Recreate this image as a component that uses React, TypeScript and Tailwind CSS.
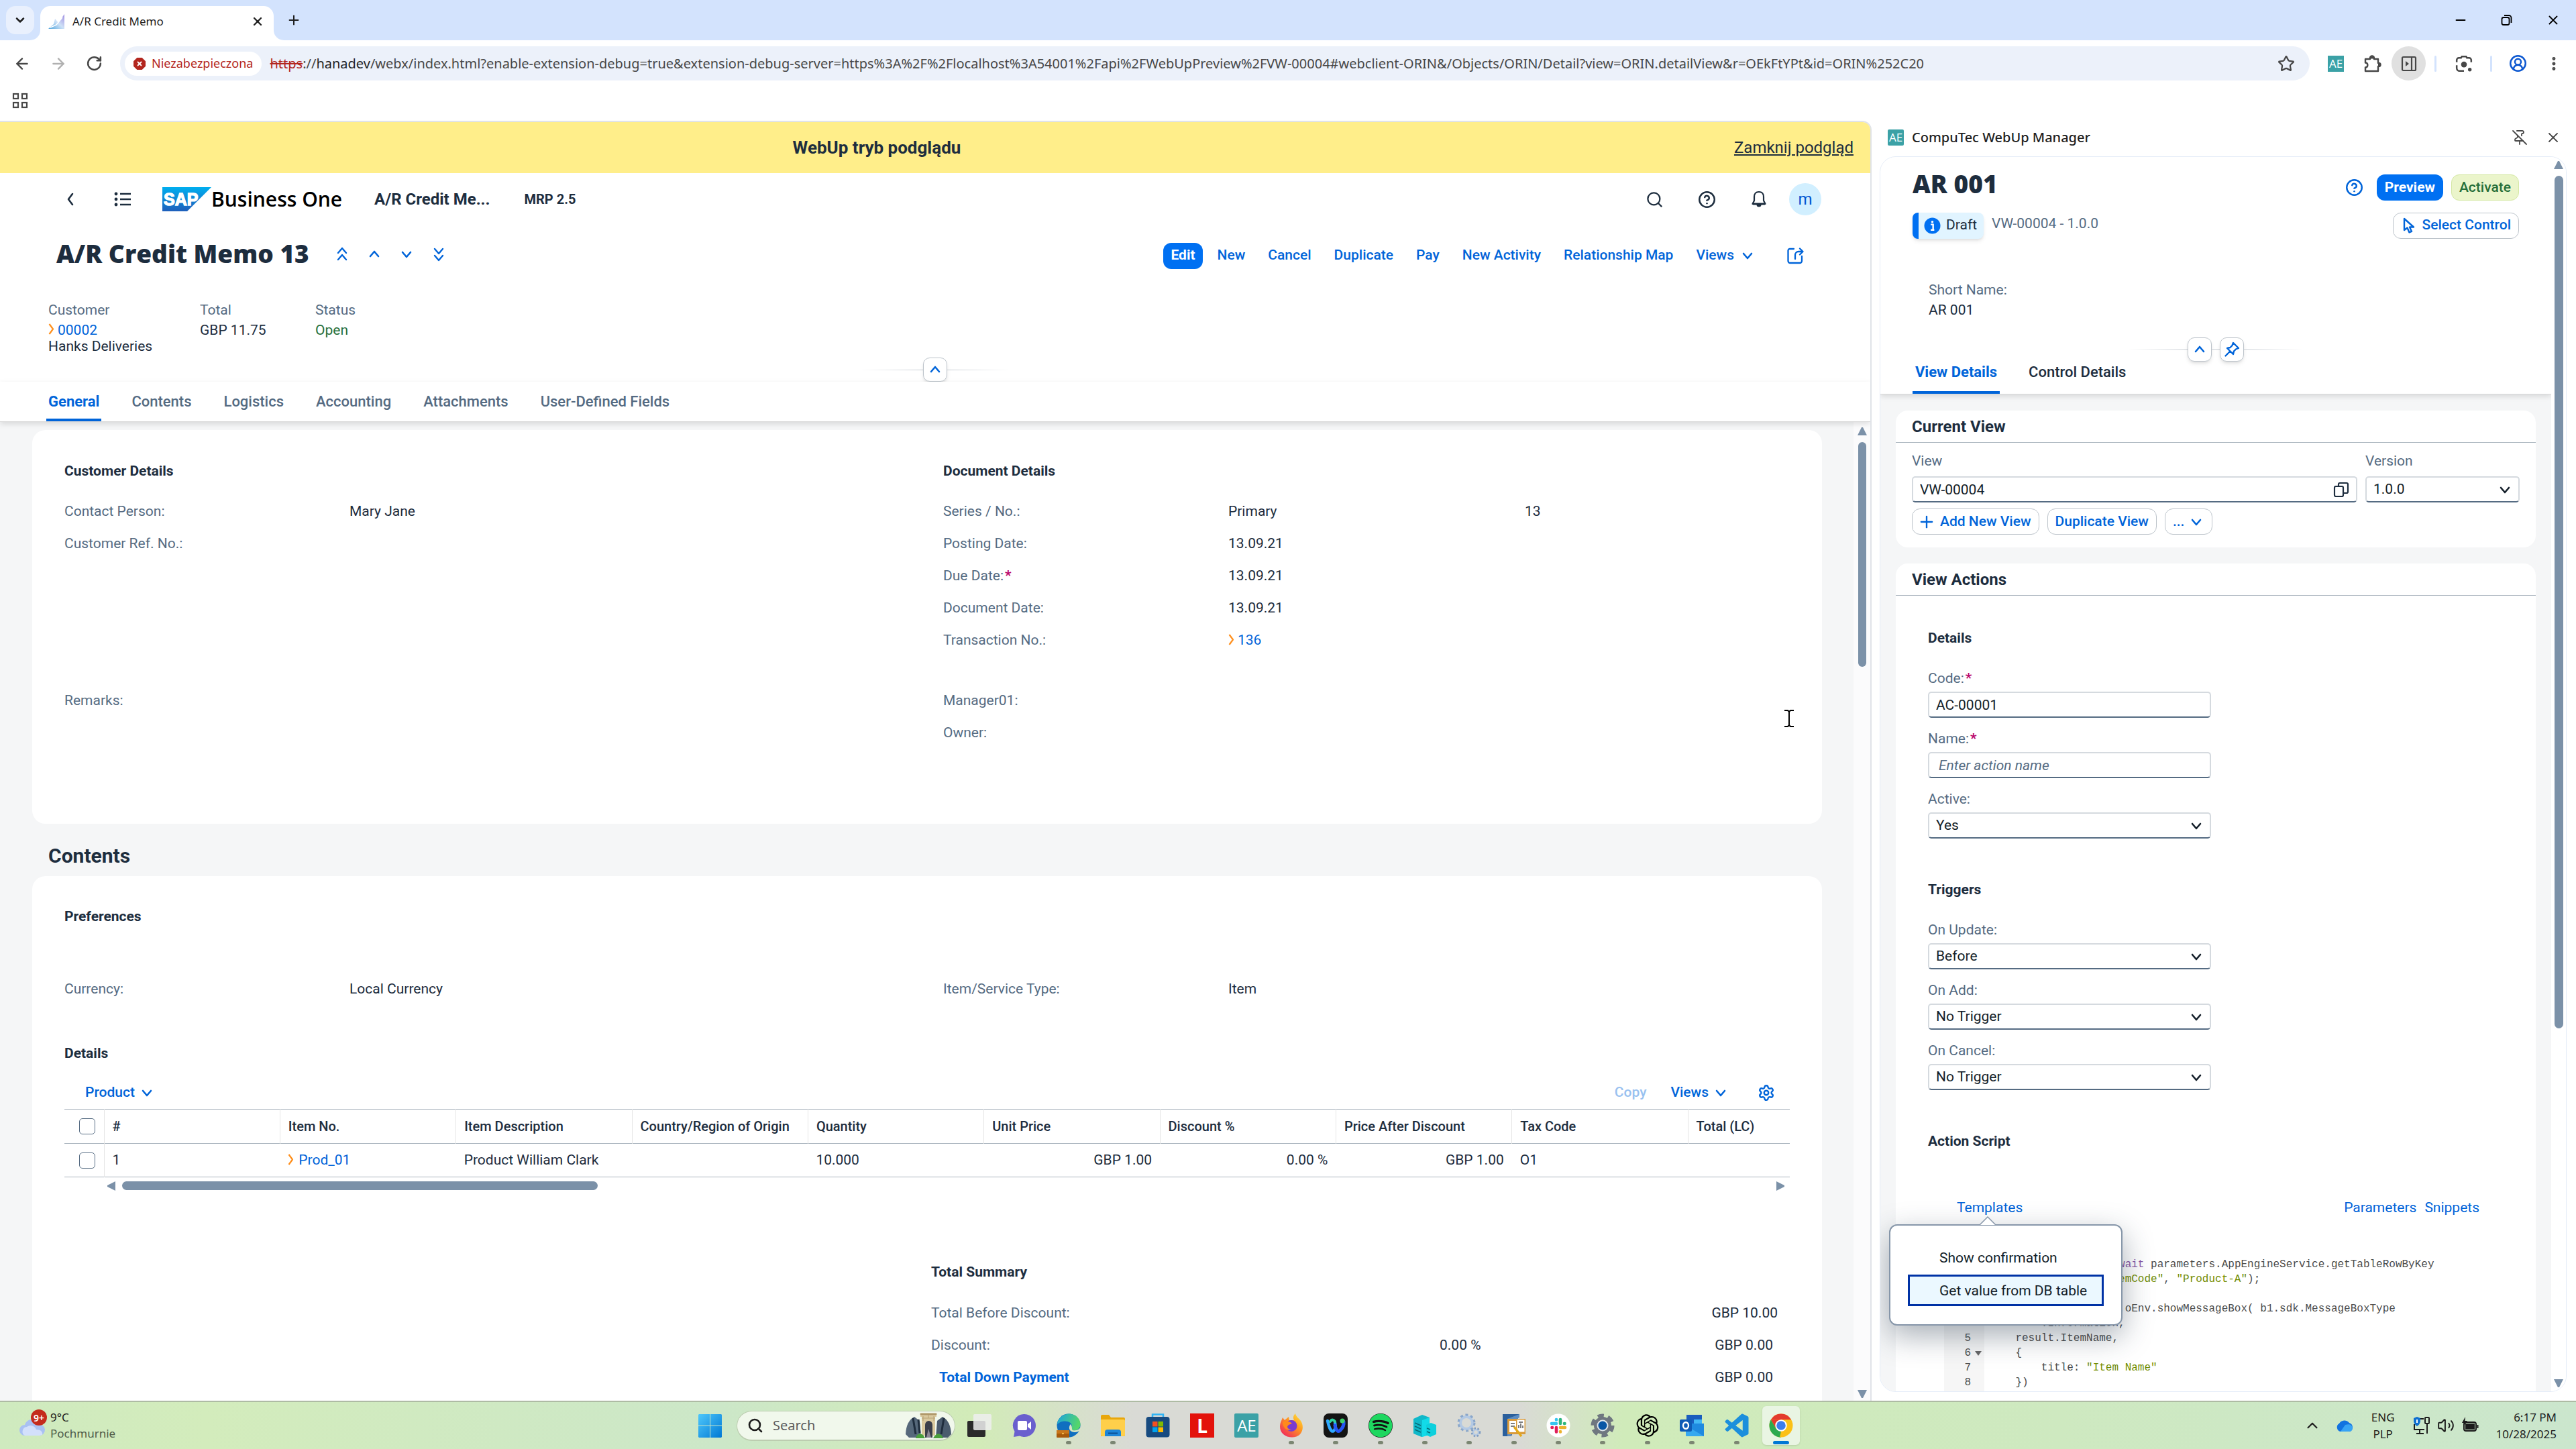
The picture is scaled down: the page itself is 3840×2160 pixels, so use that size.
import React from "react";
import {
  ArrowLeft,
  ArrowRight,
  ChevronDown,
  ChevronUp,
  CircleHelp,
  CircleUserRound,
  EllipsisVertical,
  Minus,
  PinOff,
  Plus,
  RotateCw,
  Search,
  Settings,
  Star,
  Volume2,
  X,
} from "lucide-react";
import { FaSpotify } from "react-icons/fa";
import { RiOpenaiFill } from "react-icons/ri";
import { BiLogoVisualStudio } from "react-icons/bi";

type ChevronProps = { dir?: "up" | "down" | "left" | "right"; className?: string };

const chevronPaths = {
  up: "M6 15 L12 8 L18 15",
  down: "M6 9 L12 16 L18 9",
  left: "M15 4 L9 12 L15 20",
  right: "M9 4 L15 12 L9 20",
};

const Chevron: React.FC<ChevronProps> = ({ dir = "down", className = "" }) => (
  <svg viewBox="0 0 24 24" className={`size-6 shrink-0 ${className}`} fill="none" stroke="currentColor" strokeWidth="2.6">
    <path d={chevronPaths[dir]} strokeLinecap="round" strokeLinejoin="round" />
  </svg>
);

const DoubleChevron: React.FC<{ up?: boolean }> = ({ up }) => (
  <svg viewBox="0 0 24 24" className="size-6" fill="none" stroke="currentColor" strokeWidth="2.4" strokeLinecap="round" strokeLinejoin="round">
    {up ? <path d="M6 10 L12 3 L18 10 M6 20 L12 13 L18 20" /> : <path d="M6 4 L12 11 L18 4 M6 14 L12 21 L18 14" />}
  </svg>
);

const LinkArrow: React.FC = () => (
  <svg viewBox="0 0 10 20" className="h-5 w-2.5 shrink-0 text-[#ff8f1c]" fill="none" stroke="currentColor" strokeWidth="2.2">
    <path d="M1.5 1 L7 8.5 L1.5 16" strokeLinejoin="round" />
  </svg>
);

const PinIcon: React.FC = () => (
  <svg viewBox="0 0 24 24" className="size-6" fill="none" stroke="currentColor" strokeWidth="2.4" strokeLinejoin="round" strokeLinecap="round">
    <path d="M14 2 L22 10 L18 11.500 L15 14.500 L14 19 L5 10 L9.500 9 L12.500 6 Z M9.500 14.500 L2.500 21.500" />
  </svg>
);

const BellIcon: React.FC = () => (
  <svg viewBox="0 0 26 26" className="size-[26px]" fill="none" stroke="currentColor" strokeWidth="2.200" strokeLinejoin="round">
    <path d="M13 2 C8.500 2 6 5 6 9.500 V15 L3.500 20 H22.500 L20 15 V9.500 C20 5 17.500 2 13 2 Z" />
    <path d="M4 20 H22" strokeWidth="3" />
    <path d="M9.500 21 H16.500 A3.500 3.500 0 0 1 9.500 21 Z" fill="currentColor" stroke="none" />
  </svg>
);

const AeBadge: React.FC<{ className?: string }> = ({ className = "size-6 text-[17px]" }) => (
  <span className={`flex items-center justify-center bg-[#3ba1a6] text-white font-['Open_Sans'] leading-none ${className}`}>AE</span>
);

/* ---------- browser chrome ---------- */

const TabStrip: React.FC = () => (
  <div className="flex h-[60px] items-end bg-[#d3e3fd] pl-[9px] text-[#1f1f1f]">
    <button aria-label="Search tabs" className="mb-[9px] flex size-[42px] items-center justify-center rounded-[14px] bg-[#e9f0fd]">
      <ChevronDown className="size-5" strokeWidth={3} />
    </button>
    <div className="relative ml-[9px] flex h-[51px] w-[348px] items-center rounded-t-[15px] bg-white pb-1.5 pl-3 pr-3.5">
      <svg viewBox="0 0 15 15" className="absolute -left-[15px] bottom-0 size-[15px]" fill="#fff">
        <path d="M15 0 V15 H0 A15 15 0 0 0 15 0 Z" />
      </svg>
      <svg viewBox="0 0 15 15" className="absolute -right-[15px] bottom-0 size-[15px]" fill="#fff">
        <path d="M0 0 V15 H15 A15 15 0 0 1 0 0 Z" />
      </svg>
      <svg viewBox="0 0 24 24" className="size-6">
        <defs>
          <linearGradient id="fav" x1="0" y1="1" x2="1" y2="0">
            <stop offset="0" stopColor="#4fa4dc" />
            <stop offset="0.5" stopColor="#cfe2f7" />
            <stop offset="1" stopColor="#9d8be0" />
          </linearGradient>
        </defs>
        <path d="M0 23 L8 16 L10 8 L15 14 L24 1 V23 Z" fill="url(#fav)" />
        <path d="M3 21 L12 17 L21 6" stroke="#fff" strokeWidth="1.5" fill="none" />
      </svg>
      <span className="ml-3 flex-1 text-[17px]">A/R Credit Memo</span>
      <button aria-label="Close tab">
        <X className="size-5" strokeWidth={2.8} />
      </button>
    </div>
    <button aria-label="New tab" className="mb-[19px] ml-[19px]">
      <Plus className="size-[22px]" strokeWidth={2.2} />
    </button>
    <div className="mb-[19px] ml-auto flex items-center gap-[47px] pr-[23px] text-black">
      <button aria-label="Minimize">
        <Minus className="size-[22px]" strokeWidth={2.2} />
      </button>
      <button aria-label="Restore">
        <svg viewBox="0 0 22 22" className="size-[22px]" fill="none" stroke="currentColor" strokeWidth="1.8">
          <rect x="3.5" y="7" width="11" height="11" rx="2.5" />
          <path d="M7 4 H14 A3.5 3.5 0 0 1 17.5 7.500 V15" />
        </svg>
      </button>
      <button aria-label="Close">
        <X className="size-[22px]" strokeWidth={2} />
      </button>
    </div>
  </div>
);

const AddressBar: React.FC = () => (
  <div className="flex h-[69px] items-center text-[#474747]">
    <button aria-label="Back" className="ml-[20px]">
      <ArrowLeft className="size-[26px]" strokeWidth={2.2} />
    </button>
    <button aria-label="Forward" disabled className="ml-[28px] text-[#b0b0b0]">
      <ArrowRight className="size-[26px]" strokeWidth={2.2} />
    </button>
    <button aria-label="Reload" className="ml-[28px]">
      <RotateCw className="size-[25px]" strokeWidth={2.4} />
    </button>
    <div className="ml-[26px] flex h-[51px] min-w-0 flex-1 items-center rounded-full bg-[#ecf1fa] pl-[7px] pr-[22px]">
      <span className="flex h-9 items-center rounded-full bg-white px-[13px] text-[18px] text-[#b3261e]">
        <svg viewBox="0 0 18 18" className="mr-[9px] size-[18px]">
          <path d="M5.300 0 H12.700 L18 5.300 V12.700 L12.700 18 H5.300 L0 12.700 V5.300 Z" fill="#b3261e" />
          <path d="M6 6 L12 12 M12 6 L6 12" stroke="#fff" strokeWidth="1.800" />
        </svg>
        Niezabezpieczona
      </span>
      <span className="ml-3 min-w-0 flex-1 overflow-hidden whitespace-nowrap text-[20px]">
        <span className="text-[#b3261e] line-through">https</span>://<span className="text-[#1f1f1f]">hanadev</span>
        /webx/index.html?enable-extension-debug=true&amp;extension-debug-server=https%3A%2F%2Flocalhost%3A54001%2Fapi%2FWebUpPreview%2FVW-00004#webclient-ORIN&amp;/Objects/ORIN/Detail?view=ORIN.detailView&amp;r=OEkFtYPt&amp;id=ORIN%252C20
      </span>
      <button aria-label="Bookmark this page">
        <Star className="size-[26px]" strokeWidth={2.1} />
      </button>
    </div>
    <div className="ml-[27px] flex items-center pr-[20px]">
      <AeBadge className="size-6 text-[17px]" />
      <button aria-label="Extensions" className="ml-[29px]">
        <svg viewBox="0 0 28 28" className="size-7" fill="none" stroke="currentColor" strokeWidth="2.400" strokeLinejoin="round">
          <path d="M3 7 H10 V5.500 A3 3 0 0 1 16 5.500 V7 H22 V13 H23 A2.500 2.500 0 0 1 23 18 H22 V25 H3 V19.500 C7.500 19.500 7.500 12.500 3 12.500 Z" />
          <path d="M10.500 6.500 A2.500 3 0 0 1 15.500 6.500 Z M22 13.500 H23 A2 2 0 0 1 23 17.500 H22 Z" fill="currentColor" stroke="none" />
        </svg>
      </button>
      <button aria-label="Side panel" className="ml-[14px] flex size-[51px] items-center justify-center rounded-full bg-[#e0e0e0]">
        <svg viewBox="0 0 24 24" className="size-6" fill="none" stroke="currentColor" strokeWidth="2.2">
          <rect x="2" y="2" width="20" height="20" rx="1.500" />
          <path d="M16 2 V22" />
          <path d="M7 8 L12 12 L7 16 Z" fill="currentColor" stroke="none" />
        </svg>
      </button>
      <span className="ml-[13px] h-6 w-[3px] rounded bg-[#d3e3fd]" />
      <button aria-label="Search with Lens" className="ml-[28px]">
        <svg viewBox="0 0 24 24" className="size-[26px]" fill="none" stroke="currentColor" strokeWidth="2.300">
          <path d="M2 10 V7 A3 3 0 0 1 5 4 H8 L9 2 H15 L16 4 H19 A3 3 0 0 1 22 7 V10 M2 14 V18 A4 4 0 0 0 6 22 H12" />
          <circle cx="12" cy="13" r="4" fill="currentColor" stroke="none" />
          <circle cx="20" cy="20" r="2.500" fill="currentColor" stroke="none" />
        </svg>
      </button>
      <span className="ml-[26px] h-6 w-[3px] rounded bg-[#d3e3fd]" />
      <button aria-label="Profile" className="ml-[25px] text-[#0b57d0]">
        <CircleUserRound className="size-[27px]" strokeWidth={2.2} />
      </button>
      <button aria-label="Menu" className="ml-[27px]">
        <EllipsisVertical className="size-[26px]" strokeWidth={2.6} />
      </button>
    </div>
  </div>
);

const BookmarksBar: React.FC = () => (
  <div className="flex h-[51px] items-center pb-[9px] pl-[17px] text-[#474747]">
    <button aria-label="Tab groups">
      <svg viewBox="0 0 26 26" className="size-[26px]" fill="none" stroke="currentColor" strokeWidth="2.200">
        <rect x="3" y="3" width="7" height="7" />
        <rect x="16" y="3" width="7" height="7" />
        <rect x="3" y="16" width="7" height="7" />
        <rect x="16" y="16" width="7" height="7" />
      </svg>
    </button>
  </div>
);

/* ---------- main application ---------- */

const SapLogo: React.FC = () => (
  <svg viewBox="0 0 73 36" className="h-9 w-[73px]" role="img" aria-label="SAP">
    <defs>
      <linearGradient id="sap" x1="0" y1="0" x2="0" y2="1">
        <stop offset="0" stopColor="#00aeef" />
        <stop offset="1" stopColor="#1e5fbb" />
      </linearGradient>
    </defs>
    <path d="M0 0 H73 L37 36 H0 Z" fill="url(#sap)" />
    <text x="2" y="27" fontFamily="Liberation Sans" fontWeight="700" fontSize="25" fill="#fff" stroke="#fff" strokeWidth="1.4">
      SAP
    </text>
  </svg>
);

const ShellBar: React.FC = () => (
  <div className="flex h-[78px] items-center pl-[93px] pr-[73px]">
    <button aria-label="Back">
      <Chevron dir="left" />
    </button>
    <button aria-label="Menu" className="ml-[53px]">
      <svg viewBox="0 0 26 26" className="size-[26px]" stroke="currentColor" strokeWidth="2.400" fill="currentColor">
        <path d="M9 5 H25 M9 13 H25 M9 21 H25" />
        <circle cx="3" cy="5" r="1.200" />
        <circle cx="3" cy="13" r="1.200" />
        <circle cx="3" cy="21" r="1.200" />
      </svg>
    </button>
    <a href="#home" className="ml-[46px] flex items-center">
      <SapLogo />
      <span className="font-['Open_Sans'] text-[30px] font-semibold leading-9 text-black">Business One</span>
    </a>
    <span className="ml-12 text-[24px] font-bold">A/R Credit Me...</span>
    <span className="ml-[51px] text-[20px] font-bold">MRP 2.5</span>
    <div className="ml-auto flex items-center gap-[51px]">
      <button aria-label="Search">
        <Search className="size-[27px]" strokeWidth={2} />
      </button>
      <button aria-label="Help">
        <CircleHelp className="size-[27px]" strokeWidth={2.2} />
      </button>
      <button aria-label="Notifications">
        <BellIcon />
      </button>
      <span className="-ml-[19px] flex size-12 items-center justify-center rounded-full bg-[#d1efff] text-[24px] text-[#0057d2]">m</span>
    </div>
  </div>
);

const TitleRow: React.FC = () => (
  <div className="flex h-[84px] items-center pl-[84px] pr-[99px]">
    <h1 className="font-['Open_Sans'] text-[37px] font-extrabold leading-[78px]">A/R Credit Memo 13</h1>
    <div className="ml-[37px] flex items-center gap-6 pt-0.5 text-[#0064d9]">
      <button aria-label="First record">
        <DoubleChevron up />
      </button>
      <button aria-label="Previous record">
        <Chevron dir="up" />
      </button>
      <button aria-label="Next record">
        <Chevron />
      </button>
      <button aria-label="Last record">
        <DoubleChevron />
      </button>
    </div>
    <div className="ml-auto flex items-center gap-2.5 pt-1.5 text-[21px] font-medium text-[#0064d9]">
      <button className="h-[39px] rounded-xl bg-[#0070f2] px-[11px] font-bold text-white">Edit</button>
      {["New", "Cancel", "Duplicate", "Pay", "New Activity", "Relationship Map"].map((label) => (
        <button key={label} className="h-[39px] px-3">
          {label}
        </button>
      ))}
      <button className="flex h-[39px] items-center gap-2 px-3">
        Views <Chevron />
      </button>
      <button aria-label="Share" className="ml-6">
        <svg viewBox="0 0 26 26" className="size-[26px]" fill="none" stroke="currentColor" strokeWidth="2.300" strokeLinejoin="round" strokeLinecap="round">
          <path d="M11 3 H5 A2.500 2.500 0 0 0 2.500 5.500 V21 A3 3 0 0 0 5.500 24 H20 A3 3 0 0 0 23 21 V14" />
          <path d="M13 18 V12 A5 5 0 0 1 18 7 H24 M20 2.500 L24.500 7 L20 11.500" />
        </svg>
      </button>
    </div>
  </div>
);

const Facets: React.FC = () => (
  <dl className="mt-[30px] flex h-[83px] pl-[72px] text-[21px] leading-6">
    <div className="w-[226px]">
      <dt className="mb-1.5 text-[#556b82]">Customer</dt>
      <dd>
        <a href="#customer" className="flex items-center gap-1 text-[#0064d9]">
          <LinkArrow /> 00002
        </a>
        Hanks Deliveries
      </dd>
    </div>
    <div className="w-[172px]">
      <dt className="mb-1.5 text-[#556b82]">Total</dt>
      <dd>GBP 11.75</dd>
    </div>
    <div>
      <dt className="mb-1.5 text-[#556b82]">Status</dt>
      <dd className="text-[#256f3a]">Open</dd>
    </div>
  </dl>
);

const sectionTabs = ["General", "Contents", "Logistics", "Accounting", "Attachments", "User-Defined Fields"];

const SectionTabs: React.FC = () => (
  <nav className="relative z-10 flex h-[60px] items-stretch gap-[42px] border-b border-[#d9d9d9] bg-white pl-[69px] text-[22px] font-medium text-[#556b82] shadow-[0_3px_8px_rgba(0,0,0,0.12)]">
    {sectionTabs.map((tab, i) => (
      <a
        key={tab}
        href={`#${tab}`}
        className={`flex items-center border-b-4 px-[3px] pt-1 ${i === 0 ? "border-[#0064d9] font-bold text-[#0064d9]" : "border-transparent"}`}
      >
        {tab}
      </a>
    ))}
  </nav>
);

const Required: React.FC = () => <span className="ml-0.5 font-bold text-[#ba066c]">*</span>;

type FieldProps = { label: string; value?: React.ReactNode; extra?: string; required?: boolean };

const Field: React.FC<FieldProps> = ({ label, value, extra, required }) => (
  <div className="flex h-12 items-center pt-0.5">
    <span className="w-[425px] text-[#556b82]">
      {label}:{required && <Required />}
    </span>
    <span className="w-[442px]">{value}</span>
    {extra && <span>{extra}</span>}
  </div>
);

const GeneralCard: React.FC = () => (
  <section className="mx-12 mr-[47px] mt-3 grid grid-cols-2 rounded-[20px] bg-white pb-28 pl-12 pt-[49px]">
    <div>
      <h3 className="mb-6 font-bold leading-6">Customer Details</h3>
      <Field label="Contact Person" value="Mary Jane" />
      <Field label="Customer Ref. No." />
      <div className="mt-[186px]">
        <Field label="Remarks" />
      </div>
    </div>
    <div>
      <h3 className="mb-6 font-bold leading-6">Document Details</h3>
      <Field label="Series / No." value="Primary" extra="13" />
      <Field label="Posting Date" value="13.09.21" />
      <Field label="Due Date" value="13.09.21" required />
      <Field label="Document Date" value="13.09.21" />
      <Field
        label="Transaction No."
        value={
          <a href="#transaction" className="flex items-center gap-1 text-[#0064d9]">
            <LinkArrow /> 136
          </a>
        }
      />
      <div className="mt-[42px]">
        <Field label="Manager01" />
        <Field label="Owner" />
      </div>
    </div>
  </section>
);

const columns = [
  "#",
  "Item No.",
  "Item Description",
  "Country/Region of Origin",
  "Quantity",
  "Unit Price",
  "Discount %",
  "Price After Discount",
  "Tax Code",
  "Total (LC)",
];

const RowCheck: React.FC<{ label: string }> = ({ label }) => (
  <input type="checkbox" aria-label={label} className="block size-6 appearance-none rounded-[5px] border border-[#556b82] bg-white" />
);

const ItemsTable: React.FC = () => (
  <table className="w-full table-fixed border-collapse border-y border-[#a8b3bd] text-left">
    <colgroup>
      <col className="w-[59px]" />
      {columns.slice(0, -1).map((c) => (
        <col key={c} className="w-[10.2%]" />
      ))}
      <col />
    </colgroup>
    <thead>
      <tr className="h-[51px] border-b border-[#a8b3bd]">
        <th className="pl-[22px]">
          <RowCheck label="Select all rows" />
        </th>
        {columns.map((c) => (
          <th key={c} className="overflow-hidden whitespace-nowrap border-l border-[#e5e5e5] pl-3 text-[20px] font-medium">
            {c}
          </th>
        ))}
      </tr>
    </thead>
    <tbody>
      <tr className="h-[50px]">
        <td className="pl-[22px]">
          <RowCheck label="Select row 1" />
        </td>
        <td className="border-l border-[#e5e5e5] pl-3">1</td>
        <td className="pl-3">
          <a href="#item" className="flex items-center gap-1.5 text-[#0064d9]">
            <LinkArrow /> Prod_01
          </a>
        </td>
        <td className="pl-3">Product William Clark</td>
        <td />
        <td className="pl-3">10.000</td>
        <td className="pr-3 text-right">GBP 1.00</td>
        <td className="pr-3 text-right">0.00 %</td>
        <td className="pr-3 text-right">GBP 1.00</td>
        <td className="pl-3">O1</td>
        <td />
      </tr>
    </tbody>
  </table>
);

const ContentsCard: React.FC = () => (
  <section className="ml-12 mr-[47px] h-[900px] rounded-t-[20px] bg-white pl-12 pr-12 pt-12">
    <h3 className="font-bold leading-6">Preferences</h3>
    <div className="-mr-12 mt-[72px] grid grid-cols-2">
      <Field label="Currency" value="Local Currency" />
      <Field label="Item/Service Type" value="Item" />
    </div>
    <h3 className="mt-[60px] font-bold leading-6">Details</h3>
    <div className="mt-[23px] flex h-12 items-center pl-[31px] pr-[22px] font-medium text-[#0064d9]">
      <button className="flex items-center gap-1.5">
        Product <Chevron />
      </button>
      <button disabled className="ml-auto text-[#99c1f0]">
        Copy
      </button>
      <button className="ml-9 flex items-center gap-1.5">
        Views <Chevron />
      </button>
      <button aria-label="Settings" className="ml-[43px]">
        <Settings className="size-[26px]" strokeWidth={2.2} />
      </button>
    </div>
    <ItemsTable />
    <div className="flex h-[25px] items-center pl-16 pr-2 text-[#7b91a8]">
      <svg viewBox="0 0 12 14" className="h-3.5 w-3" fill="currentColor">
        <path d="M12 0 V14 L0 8 V6 Z" />
      </svg>
      <span className="ml-2.5 h-[13px] w-[709px] rounded-full bg-current" />
      <svg viewBox="0 0 12 14" className="ml-auto h-3.5 w-3" fill="currentColor">
        <path d="M0 0 V14 L12 8 V6 Z" />
      </svg>
    </div>
    <div className="ml-auto mr-[18px] mt-[104px] w-[1262px]">
      <h3 className="mb-[26px] font-bold leading-6">Total Summary</h3>
      <div className="flex h-12 items-center justify-between">
        <span className="text-[#556b82]">Total Before Discount:</span>
        <span>GBP 10.00</span>
      </div>
      <div className="flex h-12 items-center pr-[7px]">
        <span className="w-[758px] text-[#556b82]">Discount:</span>
        <span>0.00 %</span>
        <span className="ml-auto">GBP 0.00</span>
      </div>
      <div className="flex h-12 items-center justify-between pl-3 pr-[7px]">
        <button className="font-bold text-[#0064d9]">Total Down Payment</button>
        <span>GBP 0.00</span>
      </div>
    </div>
  </section>
);

const MainPane: React.FC = () => (
  <main className="relative flex min-w-0 flex-1 flex-col overflow-hidden rounded-tr-[14px] border-r-2 border-t-2 border-[#e0e3e8] bg-white text-[21px]">
    <div className="flex h-[76px] shrink-0 items-center bg-[#ffee8a] pr-[25px] text-[24px]">
      <span className="flex-1 pl-[29px] text-center text-[26px] font-bold">WebUp tryb podglądu</span>
      <button className="underline">Zamknij podgląd</button>
    </div>
    <ShellBar />
    <TitleRow />
    <Facets />
    <div className="flex h-9 shrink-0 items-center justify-center">
      <span className="h-px w-[93px] bg-linear-to-l from-[#c4cad1] to-transparent" />
      <button aria-label="Collapse header" className="flex size-9 items-center justify-center rounded-[10px] border border-[#bcc3ca] text-[#0064d9] shadow-md">
        <Chevron dir="up" />
      </button>
      <span className="h-px w-[93px] bg-linear-to-r from-[#c4cad1] to-transparent" />
    </div>
    <SectionTabs />
    <div className="flex min-h-0 flex-1 bg-[#f5f6f7]">
      <div className="min-w-0 flex-1 overflow-hidden">
        <GeneralCard />
        <h2 className="h-[78px] pl-[72px] pt-[29px] text-[30px] font-bold leading-[38px]">Contents</h2>
        <ContentsCard />
      </div>
      <div className="flex w-[25px] flex-col items-center justify-between bg-[#fbfbfc] pb-1 pt-2 text-[#7b91a8]">
        <div className="flex flex-col items-center gap-2.5">
          <svg viewBox="0 0 14 12" className="h-3 w-3.5" fill="currentColor">
            <path d="M6 0 H8 L14 12 H0 Z" />
          </svg>
          <span className="h-[335px] w-3 rounded-full bg-current" />
        </div>
        <svg viewBox="0 0 14 12" className="h-3 w-3.5" fill="currentColor">
          <path d="M0 0 H14 L8 12 H6 Z" />
        </svg>
      </div>
    </div>
    {/* text cursor */}
    <svg viewBox="0 0 16 28" className="absolute left-[2659px] top-[875px] h-7 w-4" fill="none" stroke="#000" strokeWidth="2">
      <path d="M1 2 H6 L8 4 L10 2 H15 M8 3 V25 M1 26 H6 L8 24 L10 26 H15" />
    </svg>
  </main>
);

/* ---------- WebUp side panel ---------- */

const fieldBox =
  "h-[39px] w-full rounded-[5px] border-2 border-[#d5dadf] border-b-[#556b82] bg-white px-2.5 text-[21px] text-[#131e29]";

type SelectProps = { id: string; label: string; value: string };

const PanelSelect: React.FC<{ id: string; value: string }> = ({ id, value }) => (
  <div className="relative">
    <select id={id} defaultValue={value} className={`${fieldBox} appearance-none`}>
      <option>{value}</option>
    </select>
    <Chevron className="pointer-events-none absolute right-2.5 top-2 text-[#131e29]" />
  </div>
);

const SelectField: React.FC<SelectProps> = ({ id, label, value }) => (
  <div className="h-[90px] w-[422px]">
    <label htmlFor={id} className="mb-2 block leading-6 text-[#556b82]">
      {label}:
    </label>
    <PanelSelect id={id} value={value} />
  </div>
);

const InputField: React.FC<{ id: string; label: string; value?: string; placeholder?: string }> = ({ id, label, value, placeholder }) => (
  <div className="h-[90px] w-[422px]">
    <label htmlFor={id} className="mb-2 block leading-6 text-[#556b82]">
      {label}:<Required />
    </label>
    <input id={id} defaultValue={value} placeholder={placeholder} className={`${fieldBox} placeholder:pl-1 placeholder:italic placeholder:text-[#556b82]`} />
  </div>
);

const PanelHeader: React.FC = () => (
  <header className="relative z-10 border-b border-[#d9d9d9] bg-white pl-12 pr-12 pt-[26px] shadow-[0_3px_8px_rgba(0,0,0,0.12)]">
    <div className="flex h-[39px] items-center">
      <h1 className="mb-3 flex-1 font-['Open_Sans'] text-[37px] font-extrabold leading-9">AR 001</h1>
      <button aria-label="Help" className="text-[#0064d9]">
        <CircleHelp className="size-[27px]" strokeWidth={2.2} />
      </button>
      <button className="ml-5 h-[39px] rounded-xl bg-[#0070f2] px-3 font-bold text-white">Preview</button>
      <button className="ml-3 h-[39px] rounded-xl border border-[#d5e8a5] bg-[#ebf5cb] px-[11px] font-medium text-[#256f3a]">Activate</button>
    </div>
    <div className="mt-[17px] flex h-10 items-center">
      <span className="flex h-[39px] items-center gap-2 rounded-lg border-l-[9px] border-[#0070f2] bg-[#e1f4ff] pl-2 pr-2.5 shadow-md">
        <svg viewBox="0 0 26 26" className="size-[25px]">
          <circle cx="13" cy="13" r="12.500" fill="#0070f2" />
          <path d="M10.500 11 H14.200 V19 M10.500 19.500 H16" stroke="#fff" strokeWidth="2.500" fill="none" />
          <circle cx="13" cy="7" r="1.800" fill="#fff" />
        </svg>
        Draft
      </span>
      <span className="mb-1 ml-3 flex-1 text-[#556b82]">VW-00004 - 1.0.0</span>
      <button className="flex h-[39px] items-center gap-2 rounded-xl border border-[#bcc3ca] px-[11px] font-medium text-[#0064d9]">
        <svg viewBox="0 0 24 24" className="size-6" fill="none" stroke="currentColor" strokeWidth="2.400" strokeLinejoin="round">
          <path d="M5 2 V19 L9.500 15.500 L12.500 22.500 L16 21 L13 14.500 H19 Z" />
        </svg>
        Select Control
      </button>
    </div>
    <dl className="mt-16 pl-6 leading-6">
      <dt className="mb-1.5 text-[#556b82]">Short Name:</dt>
      <dd>AR 001</dd>
    </dl>
    <div className="-mr-12 -ml-12 mt-[29px] flex h-9 items-center justify-center text-[#0064d9]">
      <span className="h-px w-[90px] bg-linear-to-l from-[#c4cad1] to-transparent" />
      <button aria-label="Collapse header" className="flex size-9 items-center justify-center rounded-[10px] border border-[#bcc3ca] shadow-md">
        <Chevron dir="up" />
      </button>
      <span className="h-px w-3 bg-[#c4cad1]" />
      <button aria-label="Pin header" className="flex size-9 items-center justify-center rounded-[10px] border border-[#bcc3ca] shadow-md">
        <PinIcon />
      </button>
      <span className="h-px w-[90px] bg-linear-to-r from-[#c4cad1] to-transparent" />
    </div>
    <nav className="flex h-12 items-stretch gap-[39px] text-[22px] font-medium">
      <a href="#view" className="border-b-4 border-[#0064d9] px-1 pt-1 leading-6 font-bold text-[#0064d9]">
        View Details
      </a>
      <a href="#control" className="px-1 pt-1 leading-6">
        Control Details
      </a>
    </nav>
  </header>
);

const outlineButton = "flex h-[39px] items-center gap-1.5 rounded-xl border border-[#bcc3ca] px-[11px] font-medium text-[#0064d9]";

const CurrentViewCard: React.FC = () => (
  <section className="rounded-[18px] bg-white pb-[19px]">
    <h2 className="flex h-12 items-center border-b border-[#a8b3bd] px-6 text-[24px] font-bold">Current View</h2>
    <div className="flex gap-3 px-6 pt-[15px]">
      <div className="flex-1">
        <label htmlFor="view" className="mb-[11px] block leading-6 text-[#556b82]">
          View
        </label>
        <div className="relative">
          <input id="view" defaultValue="VW-00004" className={fieldBox} />
          <button aria-label="Value help" className="absolute right-3 top-2">
            <svg viewBox="0 0 24 24" className="size-6" fill="none" stroke="currentColor" strokeWidth="2.200">
              <rect x="2" y="7" width="13" height="15" rx="2" />
              <path d="M8 7 V4 A2 2 0 0 1 10 2 H20 A2 2 0 0 1 22 4 V15 A2 2 0 0 1 20 17 H16" />
            </svg>
          </button>
        </div>
      </div>
      <div className="w-[230px]">
        <label htmlFor="version" className="mb-[11px] block leading-6 text-[#556b82]">
          Version
        </label>
        <PanelSelect id="version" value="1.0.0" />
      </div>
    </div>
    <div className="mt-[9px] flex gap-3 px-6">
      <button className={outlineButton}>
        <Plus className="-ml-1 size-7" strokeWidth={2} /> Add New View
      </button>
      <button className={outlineButton}>Duplicate View</button>
      <button className={outlineButton}>
        ... <Chevron />
      </button>
    </div>
  </section>
);

type CodeLine = { no?: number; fold?: boolean; code: React.ReactNode };

const str = (s: string) => <span className="text-[#718c00]">{s}</span>;

const codeLines: CodeLine[] = [
  { no: 1, code: "" },
  {
    no: 2,
    code: (
      <>
        {"    const result = "}
        <span className="text-[#8959a8]">await</span>
        {" parameters.AppEngineService.getTableRowByKey"}
      </>
    ),
  },
  {
    code: (
      <>
        {"        ("}
        {str('"OITM"')}, {str('"ItemCode"')}, {str('"Product-A"')});
      </>
    ),
  },
  { no: 3, code: "" },
  {
    no: 4,
    code: (
      <>
        {"    "}
        <span className="text-[#8959a8]">await</span>
        {" parameters.oEnv.showMessageBox( b1.sdk.MessageBoxType"}
      </>
    ),
  },
  { code: "        .Information," },
  { no: 5, code: "    result.ItemName," },
  { no: 6, fold: true, code: "    {" },
  { no: 7, code: <>{"        title: "}{str('"Item Name"')}</> },
  { no: 8, code: "    })" },
];

const CodeEditor: React.FC = () => (
  <div className="mx-6 mt-10 h-[230px] bg-[linear-gradient(to_right,#f6f6f6_60px,#fff_60px)] font-['Liberation_Mono',monospace] text-[16px] leading-[22px] text-[#4d4d4c]">
    {codeLines.map((line, i) => (
      <div key={i} className="flex h-[22px] whitespace-pre">
        <span className="w-10 text-right">{line.no}</span>
        <span className="flex w-7 items-center justify-start pl-1.5">
          {line.fold && (
            <svg viewBox="0 0 10 7" className="h-[7px] w-2.5" fill="#666">
              <path d="M0 0 H10 L5 7 Z" />
            </svg>
          )}
        </span>
        <code className="font-[inherit]">{line.code}</code>
      </div>
    ))}
  </div>
);

const TemplatesMenu: React.FC = () => (
  <div className="relative">
    <button className="block leading-6 text-[#0064d9]">Templates</button>
    <div
      role="menu"
      className="absolute -left-[101px] top-[37px] z-20 h-[151px] w-[348px] rounded-xl border-2 border-[#8696a9] bg-white px-[26px] pt-[23px] shadow-[0_15px_45px_rgba(34,53,72,0.4)]"
    >
      <svg viewBox="0 0 24 14" className="absolute left-[133px] -top-[14px] h-3.5 w-6" fill="#fff">
        <path d="M0 13 L12 1 L24 13" stroke="#8696a9" strokeWidth="1.500" />
      </svg>
      <button role="menuitem" className="flex h-[50px] w-full items-center whitespace-nowrap pl-[47px]">
        Show confirmation
      </button>
      <button role="menuitem" className="flex h-[47px] w-full items-center whitespace-nowrap border-[3px] border-[#0032a5] bg-[#ebf8ff] pl-[44px]">
        Get value from DB table
      </button>
    </div>
  </div>
);

const ViewActionsCard: React.FC = () => (
  <section className="mt-6 rounded-t-[18px] bg-white">
    <h2 className="flex h-12 items-center border-b border-[#a8b3bd] px-6 text-[24px] font-bold">View Actions</h2>
    <div className="px-12 pt-[51px]">
      <h3 className="mb-9 font-bold leading-6">Details</h3>
      <InputField id="code" label="Code" value="AC-00001" />
      <InputField id="name" label="Name" placeholder="Enter action name" />
      <SelectField id="active" label="Active" value="Yes" />
      <h3 className="mb-9 mt-[45px] font-bold leading-6">Triggers</h3>
      <SelectField id="on-update" label="On Update" value="Before" />
      <SelectField id="on-add" label="On Add" value="No Trigger" />
      <SelectField id="on-cancel" label="On Cancel" value="No Trigger" />
      <h3 className="mt-[45px] font-bold leading-6">Action Script</h3>
      <div className="mt-[75px] flex pl-[43px] pr-9 leading-6 text-[#131e29]">
        <TemplatesMenu />
        <button className="ml-auto text-[#0064d9]">Parameters</button>
        <button className="ml-3 text-[#0064d9]">Snippets</button>
      </div>
      <CodeEditor />
    </div>
  </section>
);

const SidePanel: React.FC = () => (
  <aside className="flex w-[1050px] shrink-0 flex-col pb-[13px] pl-3 pr-3.5 text-[21px]">
    <div className="flex h-[53px] items-center pb-1 pl-3 pr-2 text-[#1f1f1f]">
      <AeBadge className="size-6 rounded-xs text-[17px]" />
      <span className="ml-3 flex-1 font-['Noto_Sans'] text-[20px] font-medium">CompuTec WebUp Manager</span>
      <button aria-label="Unpin">
        <PinOff className="size-6 text-[#474747]" strokeWidth={1.8} />
      </button>
      <button aria-label="Close panel" className="ml-[26px]">
        <X className="size-6 text-[#474747]" strokeWidth={1.8} />
      </button>
    </div>
    <div className="flex min-h-0 flex-1 overflow-hidden rounded-3xl border border-[#e4ecf8]">
      <div className="min-w-0 flex-1 overflow-hidden bg-[#f5f6f7]">
        <PanelHeader />
        <div className="px-[23px] pt-6">
          <CurrentViewCard />
          <ViewActionsCard />
        </div>
      </div>
      <div className="flex w-[22px] flex-col items-center justify-between bg-white pb-1.5 pt-1.5 text-[#7b91a8]">
        <div className="flex flex-col items-center gap-2.5">
          <svg viewBox="0 0 14 12" className="h-3 w-3.5" fill="currentColor">
            <path d="M6 0 H8 L14 12 H0 Z" />
          </svg>
          <span className="h-[1271px] w-[13px] rounded-full bg-current" />
        </div>
        <svg viewBox="0 0 14 12" className="h-3 w-3.5" fill="currentColor">
          <path d="M0 0 H14 L8 12 H6 Z" />
        </svg>
      </div>
    </div>
  </aside>
);

/* ---------- Windows taskbar ---------- */

const TaskSvg: React.FC<{ children: React.ReactNode }> = ({ children }) => (
  <svg viewBox="0 0 36 36" className="size-9">
    {children}
  </svg>
);

const taskApps: { name: string; open?: boolean; active?: boolean; icon: React.ReactNode }[] = [
  {
    name: "Task view",
    icon: (
      <TaskSvg>
        <rect x="0" y="11" width="27" height="24" rx="2" fill="#2a2a2a" />
        <rect x="9" y="1" width="27" height="24" rx="2" fill="#eee" fillOpacity=".85" />
      </TaskSvg>
    ),
  },
  {
    name: "Chat",
    icon: (
      <TaskSvg>
        <path d="M18 1 A17 17 0 1 1 11 33.500 L2 35 L3.500 27 A17 17 0 0 1 18 1 Z" fill="#6a5fce" />
        <rect x="8" y="11" width="14" height="14" rx="2" fill="#fff" />
        <path d="M23 16 L28 12 V24 L23 20 Z" fill="#fff" />
      </TaskSvg>
    ),
  },
  {
    name: "Edge",
    open: true,
    icon: (
      <TaskSvg>
        <defs>
          <linearGradient id="edge" x1="0" y1="0" x2="1" y2="0.300">
            <stop offset="0" stopColor="#1aa3e0" />
            <stop offset="1" stopColor="#54d66b" />
          </linearGradient>
        </defs>
        <circle cx="18" cy="18" r="17.500" fill="#0f6fc0" />
        <path d="M1 16 C2 4 14 0 20 0.500 C30 1.500 36 9 35.500 17 C35 23 30 26 24 25 C20 24 22 22 23 19 C23 12 10 8 1 16 Z" fill="url(#edge)" />
        <path d="M35 25 C31 29 23 29 20 25 C18 22 19 18 21 16 C24 20 22 23 24 25 C28 26 33 25 35.500 21 Z" fill="#d8e6c4" />
        <rect x="0" y="25" width="19" height="11" rx="1" fill="#a85a0b" />
        <rect x="0" y="25" width="19" height="5" fill="#c9761a" />
        <circle cx="9.500" cy="30" r="1.300" fill="#ffcf5c" />
      </TaskSvg>
    ),
  },
  {
    name: "File Explorer",
    open: true,
    icon: (
      <TaskSvg>
        <path d="M0 4 Q0 2 2 2 H12 L15 6 H34 Q36 6 36 8 V32 Q36 34 34 34 H0 Z" fill="#e8a70c" />
        <path d="M0 9 H34 Q36 9 36 11 V32 Q36 34 34 34 H2 Q0 34 0 32 Z" fill="#ffcf4a" />
        <path d="M6 34 V28 Q6 24 10 24 H26 Q30 24 30 28 V34 Z" fill="#1e86d8" />
        <path d="M11 29.500 H25" stroke="#0b4f94" strokeWidth="2" />
      </TaskSvg>
    ),
  },
  {
    name: "Microsoft Store",
    icon: (
      <TaskSvg>
        <path d="M10 6 V1.500 H26 V6" fill="none" stroke="#2eb3f5" strokeWidth="2.500" />
        <rect x="0.500" y="5" width="35" height="30.500" rx="4" fill="#174a80" />
        <rect x="10" y="12" width="7.500" height="7.500" fill="#f25022" />
        <rect x="18.500" y="12" width="7.500" height="7.500" fill="#7fba00" />
        <rect x="10" y="20.500" width="7.500" height="7.500" fill="#00a4ef" />
        <rect x="18.500" y="20.500" width="7.500" height="7.500" fill="#ffb900" />
      </TaskSvg>
    ),
  },
  { name: "L", icon: <span className="flex size-9 items-center justify-center bg-[#e3120b] font-['Open_Sans'] text-[28px] font-bold leading-none text-white">L</span> },
  { name: "AE", icon: <AeBadge className="size-9 rounded-xs text-[24px]" /> },
  {
    name: "Firefox",
    open: true,
    icon: (
      <TaskSvg>
        <defs>
          <linearGradient id="ff" x1="1" y1="0" x2="0.200" y2="1">
            <stop offset="0" stopColor="#fff044" />
            <stop offset="0.450" stopColor="#ff9a1f" />
            <stop offset="1" stopColor="#f0265e" />
          </linearGradient>
        </defs>
        <path d="M24 0 C25 5 29 7 32 11 C36 17 36 25 31 31 C25 37 13 37 6 31 C0 26 0 17 3 11 L5 6 L8 10 L14 5 L15 10 L22 10 C20 6 21 3 24 0 Z" fill="url(#ff)" />
        <circle cx="18" cy="18.500" r="8.500" fill="#7a3bd0" />
        <path d="M5 13 C9 10 16 12 19 15 L14 17 C10 20 13 24 18 24 C11 27 5 21 5 13 Z" fill="#ff8a1c" />
      </TaskSvg>
    ),
  },
  {
    name: "Webex",
    open: true,
    icon: (
      <TaskSvg>
        <rect width="36" height="36" rx="8" fill="#141414" />
        <path d="M6 11 Q10 29 15 26 Q19 23 17 14" fill="none" stroke="#2fa8ff" strokeWidth="4.500" strokeLinecap="round" />
        <path d="M17 12 Q13 7 10 12" fill="none" stroke="#2fd2a0" strokeWidth="4" strokeLinecap="round" />
        <path d="M17 18 Q20 30 25 25 Q31 19 30 12" fill="none" stroke="#2656f5" strokeWidth="5" strokeLinecap="round" />
        <circle cx="28" cy="11" r="3.500" fill="#3fd26b" />
      </TaskSvg>
    ),
  },
  {
    name: "Spotify",
    open: true,
    icon: (
      <span className="flex size-9 items-center justify-center rounded-full bg-[#121212] text-[#1ed760]">
        <FaSpotify className="size-9" />
      </span>
    ),
  },
  {
    name: "Server",
    open: true,
    icon: (
      <TaskSvg>
        <path d="M1 8 L14 2 L25 6 V31 L13 35 L1 30 Z" fill="#10b8c9" />
        <path d="M14 10 L25 6 V32 L14 35 Z" fill="#12dbe8" />
        <path d="M20 17 L27 14 L35 17 V31 L26 35 L20 32 Z" fill="#0ed0dd" />
        <path d="M3 14 L12 18 M3 19 L12 23 M3 24 L12 28 M21 22 L26 24 M21 27 L26 29" stroke="#066b78" strokeWidth="1.500" />
      </TaskSvg>
    ),
  },
  {
    name: "Services",
    open: true,
    icon: (
      <TaskSvg>
        <circle cx="14" cy="14" r="9" fill="none" stroke="#b3c9e4" strokeWidth="4" />
        <circle cx="14" cy="14" r="12" fill="none" stroke="#8aa7cb" strokeWidth="3" strokeDasharray="4 3.800" />
        <circle cx="28" cy="28" r="4" fill="none" stroke="#b3c9e4" strokeWidth="2.500" />
        <circle cx="28" cy="28" r="6" fill="none" stroke="#7f9cc2" strokeWidth="2.500" strokeDasharray="2.600 2.400" />
      </TaskSvg>
    ),
  },
  {
    name: "Reports",
    open: true,
    icon: (
      <TaskSvg>
        <path d="M1 1 H26 L22 12 L14 34 H1 Z" fill="#2b5f9c" />
        <path d="M8 8 L26 1 V6 L14 12 V34 H8 Z" fill="#5e8dc2" />
        <rect x="8" y="8" width="27" height="23" fill="#d99b3c" />
        <rect x="11" y="11" width="10" height="17" fill="#fff" />
        <rect x="22.500" y="9.500" width="11" height="18" fill="#fff" />
        <path d="M13 15 H19 M13 19 H19 M25 13 H31 M25 22 V17 M28 22 V15 M31 22 V18" stroke="#555" strokeWidth="1.500" />
        <path d="M18 20 L29 34" stroke="#e3a91c" strokeWidth="3.500" />
      </TaskSvg>
    ),
  },
  {
    name: "Slack",
    open: true,
    icon: (
      <TaskSvg>
        <circle cx="18" cy="18" r="17.500" fill="#fff" />
        <g strokeWidth="4.600" strokeLinecap="round">
          <path d="M15 9 V9.500" stroke="#36c5f0" />
          <path d="M8 15 H15" stroke="#36c5f0" />
          <path d="M21 9 V15" stroke="#2eb67d" />
          <path d="M27 15 H27.500" stroke="#2eb67d" />
          <path d="M8.500 21 H9" stroke="#e01e5a" />
          <path d="M15 21 V27.500" stroke="#e01e5a" />
          <path d="M21 21 H28" stroke="#ecb22e" />
          <path d="M21 27 V27.500" stroke="#ecb22e" />
        </g>
      </TaskSvg>
    ),
  },
  {
    name: "Settings",
    open: true,
    icon: (
      <TaskSvg>
        <circle cx="18" cy="18" r="13" fill="#6f7780" />
        <circle cx="18" cy="18" r="14.500" fill="none" stroke="#6f7780" strokeWidth="6" strokeDasharray="9 6.180" />
        <circle cx="18" cy="18" r="8.500" fill="#dfe5ea" />
        <circle cx="18" cy="18" r="6.500" fill="#0a56a5" />
      </TaskSvg>
    ),
  },
  {
    name: "ChatGPT",
    open: true,
    icon: <RiOpenaiFill className="size-10 text-black" />,
  },
  {
    name: "Outlook",
    open: true,
    icon: (
      <TaskSvg>
        <path d="M10 2 H33 V16 H10 Z" fill="#1a5dbe" />
        <path d="M21 9 H33 V16 H21 Z" fill="#42b8f5" />
        <path d="M9 15 L36 15 V34 H11 Q9 34 9 32 Z" fill="#1f8ae0" />
        <path d="M9 18 L36 34 H11 Q9 34 9 32 Z" fill="#36a8ef" />
        <rect x="0" y="9" width="18" height="18" rx="2" fill="#0f5bb5" />
        <ellipse cx="9" cy="18" rx="4" ry="4.800" fill="none" stroke="#fff" strokeWidth="2.400" />
      </TaskSvg>
    ),
  },
  {
    name: "Visual Studio Code",
    open: true,
    icon: <BiLogoVisualStudio className="size-[42px] text-[#1c8fdc]" />,
  },
  {
    name: "Chrome",
    open: true,
    active: true,
    icon: (
      <TaskSvg>
        <circle cx="18" cy="18" r="17.500" fill="#fbc116" />
        <path d="M2.800 9.300 A17.500 17.500 0 0 1 33.200 9.300 L18 9.300 Z" fill="#e33b2e" />
        <path d="M2.800 9.300 L18 9.300 L10.400 22.400 Z" fill="#e33b2e" />
        <path d="M2.800 9.300 L10.400 22.400 L18 26.800 L18 35.500 A17.500 17.500 0 0 1 2.800 9.300 Z" fill="#2da94f" />
        <path d="M25.600 22.400 L18 35.500 L16 35.500 L18 26 Z" fill="#fbc116" />
        <circle cx="18" cy="18" r="8.700" fill="#fff" />
        <circle cx="18" cy="18" r="6.800" fill="#3b7ded" />
      </TaskSvg>
    ),
  },
];

const Taskbar: React.FC = () => (
  <footer className="flex h-[72px] shrink-0 items-center border-t-2 border-[#aebba4] bg-[linear-gradient(to_right,#cfeabf,#d3ecbc_8%,#cce7c8_28%,#d2ebb8_38%,#d9dad5_44%,#d9dad5_59%,#d0ebba_63%,#cee9c0_80%,#cbe6cd)] font-['Noto_Sans'] text-[17px] text-[#1c1c1c]">
    <div className="flex w-[1041px] items-center pl-7">
      <div className="relative">
        <svg viewBox="0 0 40 32" className="h-8 w-10">
          <path d="M9 31 A8 8 0 0 1 9 15 A11 11 0 0 1 30 14 A8.500 8.500 0 0 1 31 31 Z" fill="#a9c1f2" />
          <path d="M9 31 A7 7 0 0 1 12 18 A9 9 0 0 1 26 22 Q36 22 35 30 L31 31 Z" fill="#d3e0fb" />
        </svg>
        <span className="absolute -top-2 left-[18px] flex size-6 items-center justify-center rounded-full bg-[#c42b1c] text-[14px] font-semibold text-white">9+</span>
      </div>
      <div className="ml-[7px] leading-6">
        9°C
        <div className="text-[#4e5a48]">Pochmurnie</div>
      </div>
    </div>
    <button aria-label="Start">
      <svg viewBox="0 0 35 35" className="size-[35px]">
        <defs>
          <linearGradient id="win" x1="0" y1="0" x2="1" y2="1">
            <stop offset="0" stopColor="#4fc8fb" />
            <stop offset="1" stopColor="#0078d4" />
          </linearGradient>
        </defs>
        <path d="M1 0 H17 V17 H0 V1 Z M18 0 H34 L35 1 V17 H18 Z M0 18 H17 V35 H1 L0 34 Z M18 18 H35 V34 L34 35 H18 Z" fill="url(#win)" />
      </svg>
    </button>
    <label className="ml-[22px] flex h-[45px] w-[326px] items-center rounded-full border border-b-2 border-[#bccdb0] bg-[#f1f8ec] pl-[15px] pr-1">
      <Search className="size-6" strokeWidth={2.600} />
      <input type="search" placeholder="Search" className="ml-3.5 w-32 flex-1 bg-transparent text-[20px] placeholder:text-[#5c5c5c]" />
      <svg viewBox="0 0 70 38" className="h-[38px] w-[70px]">
        <path d="M1 32 Q2 12 14 6 L22 12 L24 37 H6 Z" fill="#56687a" />
        <path d="M69 32 Q68 12 56 6 L48 12 L46 37 H64 Z" fill="#4a5b6d" />
        <path d="M12 8 L16 32 M20 10 L22 30 M58 8 L54 32" stroke="#1f2d3d" strokeWidth="3" />
        <path d="M23 1 H47 V6 H45 V34 H25 V6 H23 Z" fill="#d9c99e" />
        <path d="M23 1 H47 V3 H23 Z M25 8 H45 M27 5 V12 M35 3 V8 M43 5 V12" fill="#a48c5c" stroke="#b8a274" strokeWidth="1" />
        <path d="M30 37 V18 A5.500 6 0 0 1 41 18 V37 Z" fill="#3a3f4a" />
        <path d="M32 37 L35 24 L39 37 Z" fill="#8c8795" />
        <path d="M16 38 Q19 28 27 33 L30 38 Z M42 38 Q48 27 55 34 L57 38 Z" fill="#4ba03c" />
      </svg>
    </label>
    <div className="ml-[3px] flex h-full w-[1261px] items-center">
      {taskApps.map((app) => (
        <button key={app.name} aria-label={app.name} className="relative flex h-full min-w-0 flex-1 items-center justify-center">
          <span
            className={`flex h-[58px] w-14 items-center justify-center ${app.active ? "rounded-md bg-[#e9f5e3] shadow-sm" : ""}`}
          >
            {app.icon}
          </span>
          {app.open && (
            <span className={`absolute bottom-[7px] h-[5px] rounded-full ${app.active ? "w-6 bg-[#0078d4]" : "w-2 bg-[#7b8672]"}`} />
          )}
        </button>
      ))}
    </div>
    <div className="ml-auto flex items-center pr-[29px] text-center leading-[25px]">
      <ChevronUp className="size-[26px]" strokeWidth={2} />
      <svg viewBox="0 0 26 20" className="ml-[22px] h-5 w-[26px]">
        <path d="M7 19 A6.500 6.500 0 0 1 5 7 A9 9 0 0 1 20 6 A7 7 0 0 1 21 19 Z" fill="#1273e0" />
        <path d="M7 19 L14 9 Q24 6 25 14 Q24 19 20 19 Z" fill="#38a4f5" />
      </svg>
      <div className="ml-[27px] text-[17px]">
        ENG
        <br />
        PLP
      </div>
      <svg viewBox="0 0 26 30" className="ml-[27px] h-[30px] w-[26px]" fill="none" stroke="#1c1c1c" strokeWidth="2">
        <path d="M9 5 H16 M2 13 V21 H17 M10 21 V27 M5 27 H16 M21 13 V27" />
        <rect x="18" y="3" width="6" height="9" rx="1" />
        <path d="M6 2 L11 4 V9 Q10 14 6 16 Q2 14 1 9 V4 Z" fill="#0f6fd0" stroke="none" />
        <path d="M6 6 V11" stroke="#fff" />
      </svg>
      <Volume2 className="ml-2.5 size-[26px]" strokeWidth={1.8} />
      <svg viewBox="0 0 26 26" className="ml-2.5 size-[26px]" fill="none" stroke="#1c1c1c" strokeWidth="2">
        <rect x="4" y="8" width="18" height="13" rx="3" />
        <rect x="7" y="11" width="12" height="7" fill="#1c1c1c" />
        <path d="M24.500 12 V17" />
        <path d="M6 0 L1 9 H5 L3 15 L9 6 H5.500 Z" fill="#1c1c1c" stroke="none" />
      </svg>
      <div className="ml-[26px] text-right text-[17px]">
        6:17 PM
        <br />
        10/28/2025
      </div>
    </div>
  </footer>
);

const App: React.FC = () => {
  return (
    <div className="flex h-screen w-full flex-col overflow-hidden bg-white font-['Roboto',sans-serif] text-[#1d2d3e]">
      <div className="shrink-0 font-['Noto_Sans',sans-serif]">
        <TabStrip />
        <AddressBar />
        <BookmarksBar />
      </div>
      <div className="flex min-h-0 flex-1">
        <MainPane />
        <SidePanel />
      </div>
      <Taskbar />
    </div>
  );
};

export default App;
